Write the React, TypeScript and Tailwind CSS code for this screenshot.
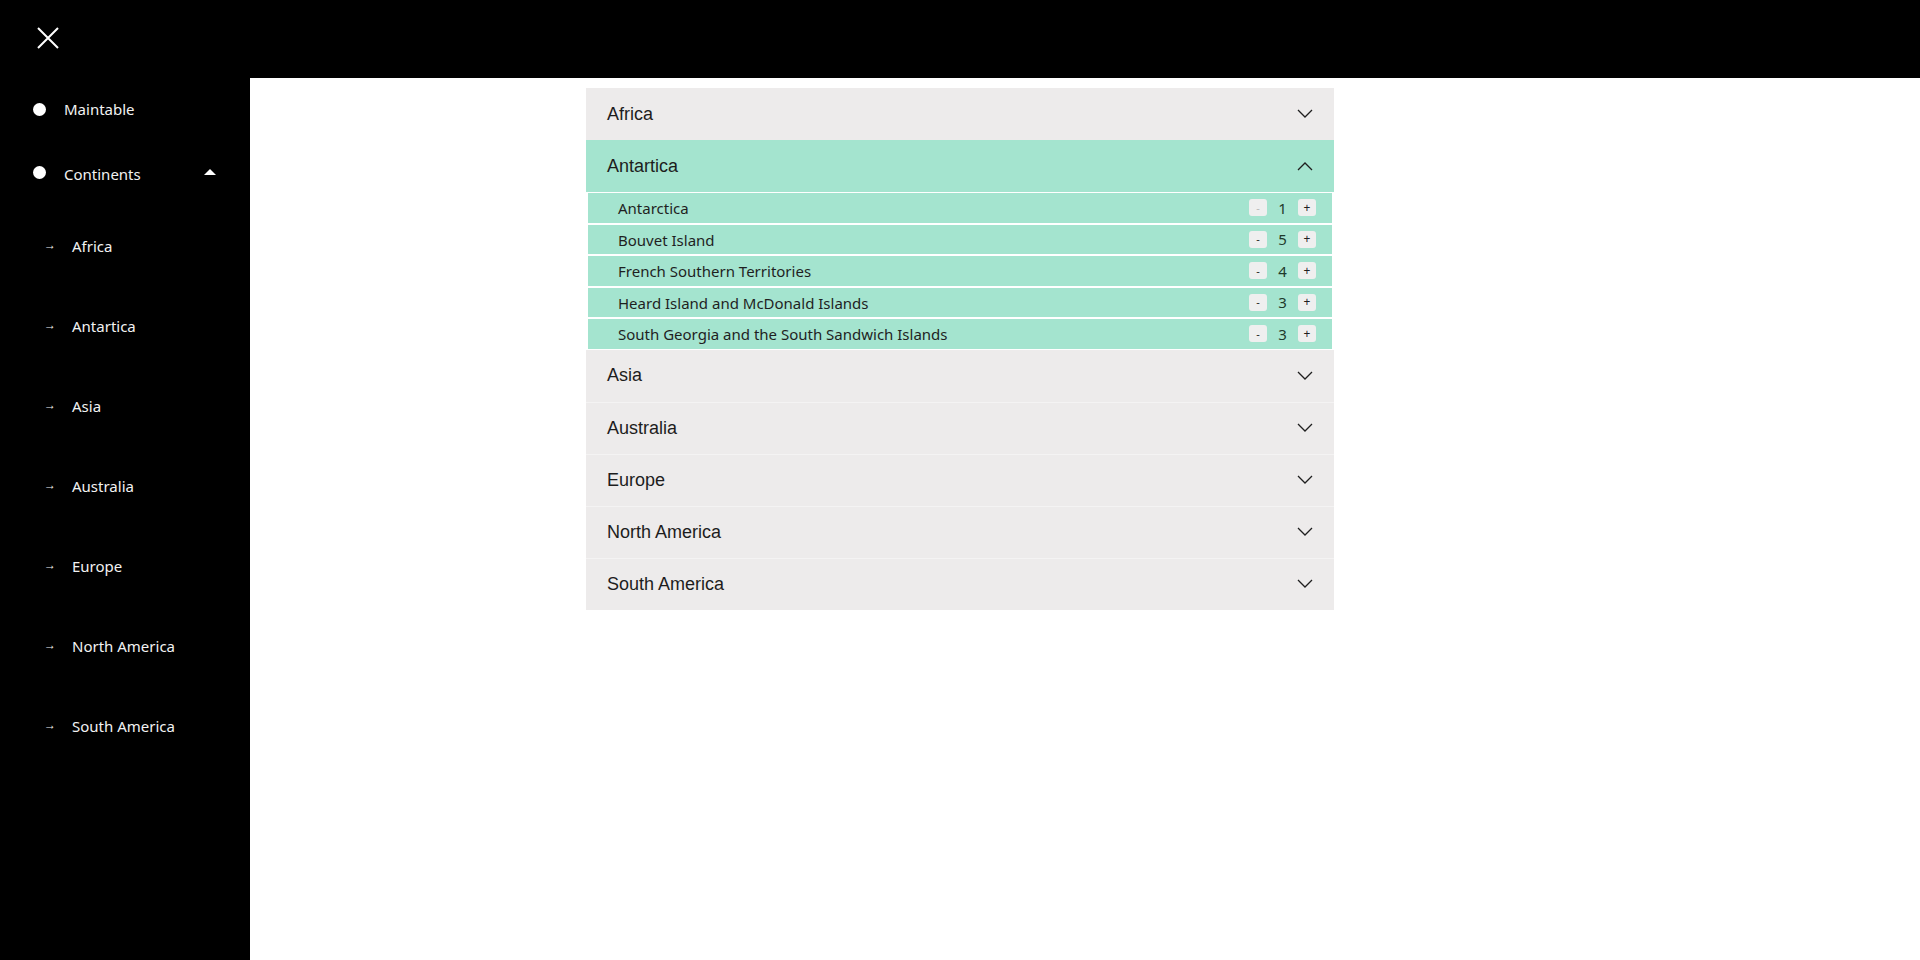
import React from "react";

const continents = ["Africa", "Antartica", "Asia", "Australia", "Europe", "North America", "South America"];

const items: { name: string; count: number }[] = [
  { name: "Antarctica", count: 1 },
  { name: "Bouvet Island", count: 5 },
  { name: "French Southern Territories", count: 4 },
  { name: "Heard Island and McDonald Islands", count: 3 },
  { name: "South Georgia and the South Sandwich Islands", count: 3 },
];

const Chevron = ({ up }: { up?: boolean }) => (
  <svg width="16" height="10" viewBox="0 0 16 10" className="shrink-0">
    <path
      d={up ? "M1 9 L8 2 L15 9" : "M1 1 L8 8 L15 1"}
      fill="none"
      stroke="#1f1f1f"
      strokeWidth="1.3"
    />
  </svg>
);

const Header = ({ label, open, first }: { label: string; open?: boolean; first?: boolean }) => (
  <div
    className={
      open
        ? "h-[52px] flex items-center justify-between pl-[21px] pr-[21px] bg-[#a4e4cf] text-[#1d1d1d]"
        : first
        ? "h-[52px] flex items-center justify-between pl-[21px] pr-[21px] bg-[#edebeb] text-[#1d1d1d]"
        : "h-[52px] flex items-center justify-between pl-[21px] pr-[21px] bg-[#edebeb] border-t border-[#f4f3f3] text-[#1d1d1d]"
    }
    style={{ fontFamily: '"Liberation Sans", Arial, sans-serif' }}
  >
    <span className="text-[18px]">{label}</span>
    <Chevron up={open} />
  </div>
);

export default function App() {
  return (
    <div className="min-h-screen w-full flex flex-col bg-black" style={{ fontFamily: '"Noto Sans", "Open Sans", sans-serif' }}>
      <div className="h-[78px] shrink-0 flex items-center pl-[37px] pb-[2px]">
        <svg width="22" height="22" viewBox="0 0 22 22">
          <path d="M1 1 L21 21 M21 1 L1 21" stroke="#ffffff" strokeWidth="2" fill="none" />
        </svg>
      </div>
      <div className="flex flex-1 min-h-[882px]">
        <aside className="w-[250px] shrink-0 bg-black text-[#f2f2f2]">
          <div className="mt-[14px] h-[34px] flex items-center pl-[33px]">
            <span className="w-[13px] h-[13px] rounded-full bg-white" />
            <span className="ml-[18px] text-[15px]">Maintable</span>
          </div>
          <div className="mt-[31px] h-[34px] flex items-center pl-[33px]">
            <span className="w-[13px] h-[13px] rounded-full bg-white -mt-[4px]" />
            <span className="ml-[18px] text-[15px] w-[140px]">Continents</span>
            <span className="-mt-[5px] w-0 h-0 border-l-[6px] border-r-[6px] border-b-[6px] border-l-transparent border-r-transparent border-b-white" />
          </div>
          <div className="mt-[15px] flex flex-col">
            {continents.map((c) => (
              <div key={c} className="h-[80px] flex items-center pl-[44px]">
                <span className="text-[12px] w-[28px] -mt-[2px]">→</span>
                <span className="text-[15px]">{c}</span>
              </div>
            ))}
          </div>
        </aside>
        <main className="flex-1 bg-white">
          <div className="ml-[336px] mt-[10px] w-[748px]">
            <Header label="Africa" first />
            <Header label="Antartica" open />
            <div className="bg-white px-[2px] flex flex-col">
              {items.map((it, i) => (
                <div
                  key={it.name}
                  className="h-[29.5px] my-[1px] bg-[#a4e4cf] flex items-center justify-between pl-[30px] pr-[16px] text-[#1f1f1f]"
                >
                  <span className="text-[15px] pt-[1px]">{it.name}</span>
                  <div className="flex items-center gap-[11px]">
                    <span
                      className={
                        i === 0
                          ? "w-[18px] h-[17px] rounded-[3px] bg-[#efefef] flex items-center justify-center text-[11px] text-[#b8b8b8]"
                          : "w-[18px] h-[17px] rounded-[3px] bg-[#efefef] flex items-center justify-center text-[11px] text-[#1f1f1f]"
                      }
                    >
                      -
                    </span>
                    <span className="w-[9px] text-center text-[15px] text-[#1f3a2c]">{it.count}</span>
                    <span className="w-[18px] h-[17px] rounded-[3px] bg-[#efefef] flex items-center justify-center text-[12px] text-[#1f1f1f]">
                      +
                    </span>
                  </div>
                </div>
              ))}
            </div>
            {continents.slice(2).map((c, i) => (
              <Header key={c} label={c} first={i === 0} />
            ))}
          </div>
        </main>
      </div>
    </div>
  );
}
